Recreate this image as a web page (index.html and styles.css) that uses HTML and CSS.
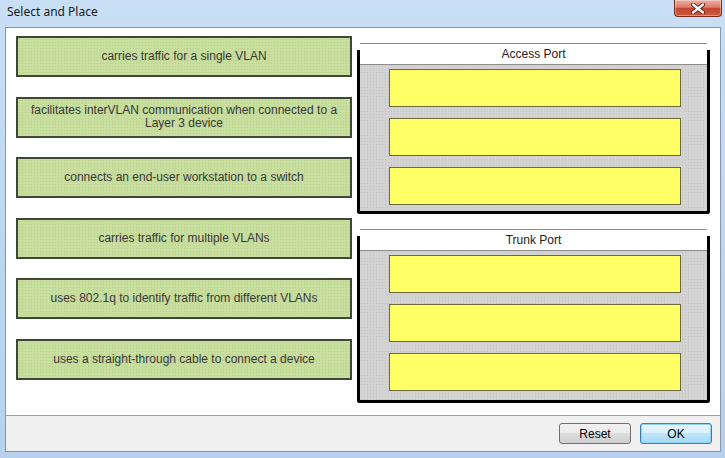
FILE: index.html
```html
<!doctype html>
<html lang="en">
<head>
    <meta charset="UTF-8">
    <title>Select and Place</title>
    <link rel="stylesheet" href="styles.css">
</head>
<body>
    <div class="window">
        <div class="titlebar">
            <span class="title">Select and Place</span>
            <button class="close" aria-label="Close">
                <svg width="16" height="11" viewBox="0 0 16 11">
                    <path d="M3 1.5 L13 9.5 M13 1.5 L3 9.5" stroke="#5a1e14" stroke-width="4.2" stroke-linecap="round"/>
                    <path d="M3 1.5 L13 9.5 M13 1.5 L3 9.5" stroke="#fff" stroke-width="2.4" stroke-linecap="round"/>
                </svg>
            </button>
        </div>

        <div class="frame">
            <div class="workspace">
                <div class="choices">
                    <div class="choice">carries traffic for a single VLAN</div>
                    <div class="choice">facilitates interVLAN communication when connected to a Layer 3 device</div>
                    <div class="choice">connects an end-user workstation to a switch</div>
                    <div class="choice">carries traffic for multiple VLANs</div>
                    <div class="choice">uses 802.1q to identify traffic from different VLANs</div>
                    <div class="choice">uses a straight-through cable to connect a device</div>
                </div>

                <div class="targets">
                    <div class="zone">
                        <div class="zone-head">Access Port</div>
                        <div class="slots">
                            <div class="slot"></div>
                            <div class="slot"></div>
                            <div class="slot"></div>
                        </div>
                    </div>
                    <div class="zone">
                        <div class="zone-head">Trunk Port</div>
                        <div class="slots">
                            <div class="slot"></div>
                            <div class="slot"></div>
                            <div class="slot"></div>
                        </div>
                    </div>
                </div>
            </div>

            <div class="footer">
                <button class="btn">Reset</button>
                <button class="btn btn-default">OK</button>
            </div>
        </div>
    </div>
</body>
</html>
```

FILE: styles.css
```css
body {
    margin: 0;
    width: 725px;
    height: 458px;
    overflow: hidden;
    background: linear-gradient(#c9dff5, #bcd5ef 60%, #b7d1ed);
    font-family: 'Liberation Sans', Arial, sans-serif;
}
.window {
    display: flex;
    flex-direction: column;
    height: 458px;
}
.titlebar {
    flex: none;
    height: 27px;
    display: flex;
    justify-content: space-between;
    align-items: flex-start;
    padding-left: 7px;
}
.title {
    margin-top: 4px;
    font-family: 'Noto Sans', sans-serif;
    font-size: 12px;
    line-height: 16px;
    color: #1a1a1a;
}
.close {
    width: 48px;
    height: 17px;
    margin-right: 3px;
    padding: 0;
    border: 1px solid #7a2a1c;
    border-top: none;
    border-radius: 0 0 4px 4px;
    background: linear-gradient(#eab0a3, #dc7e6b 45%, #c7452e 52%, #c85a40);
    box-shadow: inset 0 0 0 1px rgba(255,255,255,0.35);
    display: flex;
    align-items: center;
    justify-content: center;
}
.frame {
    flex: none;
    height: 425px;
    box-sizing: border-box;
    margin: 0 4px 0 5px;
    border: 1px solid #8796aa;
    background-color: white;
    display: flex;
    flex-direction: column;
}
.workspace {
    flex: 1;
    display: flex;
    gap: 5px;
    padding: 8px 10px 0 10px;
}
.choices {
    width: 336px;
    display: flex;
    flex-direction: column;
    gap: 19.6px;
}
.choice {
    height: 41px;
    box-sizing: border-box;
    padding: 0 12px;
    border: 2px solid #3d4934;
    background-color: #c8de9e;
    background-image: radial-gradient(#b9d08c 0.7px, transparent 0.9px);
    background-size: 3px 3px;
    display: flex;
    align-items: center;
    justify-content: center;
    text-align: center;
    font-size: 12px;
    line-height: 13px;
    color: #383838;
}
.targets {
    width: 353px;
    display: flex;
    flex-direction: column;
    gap: 22px;
    padding-top: 14px;
}
.zone {
    display: flex;
    flex-direction: column;
    border: 3px solid #000;
    border-top: none;
    border-radius: 0 0 3px 3px;
    background-color: #d3d3d3;
    background-image: radial-gradient(#c2c2c2 0.7px, transparent 0.9px);
    background-size: 3px 3px;
}
.zone-head {
    margin-top: -7px;
    height: 22px;
    box-sizing: border-box;
    border-top: 1px solid #8c8c8c;
    border-bottom: 1px solid #8c8c8c;
    background-color: white;
    text-align: center;
    font-size: 12px;
    line-height: 20px;
    color: #222;
}
.slots {
    display: flex;
    flex-direction: column;
    gap: 11px;
    padding: 4px 26px 6px 29px;
}
.zone:last-child .slots {
    padding-bottom: 9px;
}
.slot {
    height: 38px;
    box-sizing: border-box;
    border: 1px solid #6c6a3a;
    background-color: #ffff66;
}
.footer {
    flex: none;
    height: 36px;
    box-sizing: border-box;
    border-top: 1px solid #a0a0a0;
    background-color: #f0f0f0;
    display: flex;
    justify-content: flex-end;
    align-items: center;
    gap: 9px;
    padding-right: 8px;
}
.btn {
    width: 72px;
    height: 21px;
    padding: 0;
    border: 1px solid #707070;
    border-radius: 3px;
    background: linear-gradient(#f2f2f2, #ebebeb 45%, #dddddd 50%, #cfcfcf);
    font-family: 'Liberation Sans', Arial, sans-serif;
    font-size: 12px;
    color: #000;
}
.btn-default {
    border-color: #3c7fb1;
    background: linear-gradient(#eaf6fd, #d9f0fc 45%, #bee6fd 50%, #a7d9f5);
    box-shadow: inset 0 0 0 1px #8fd4f5;
}
```
